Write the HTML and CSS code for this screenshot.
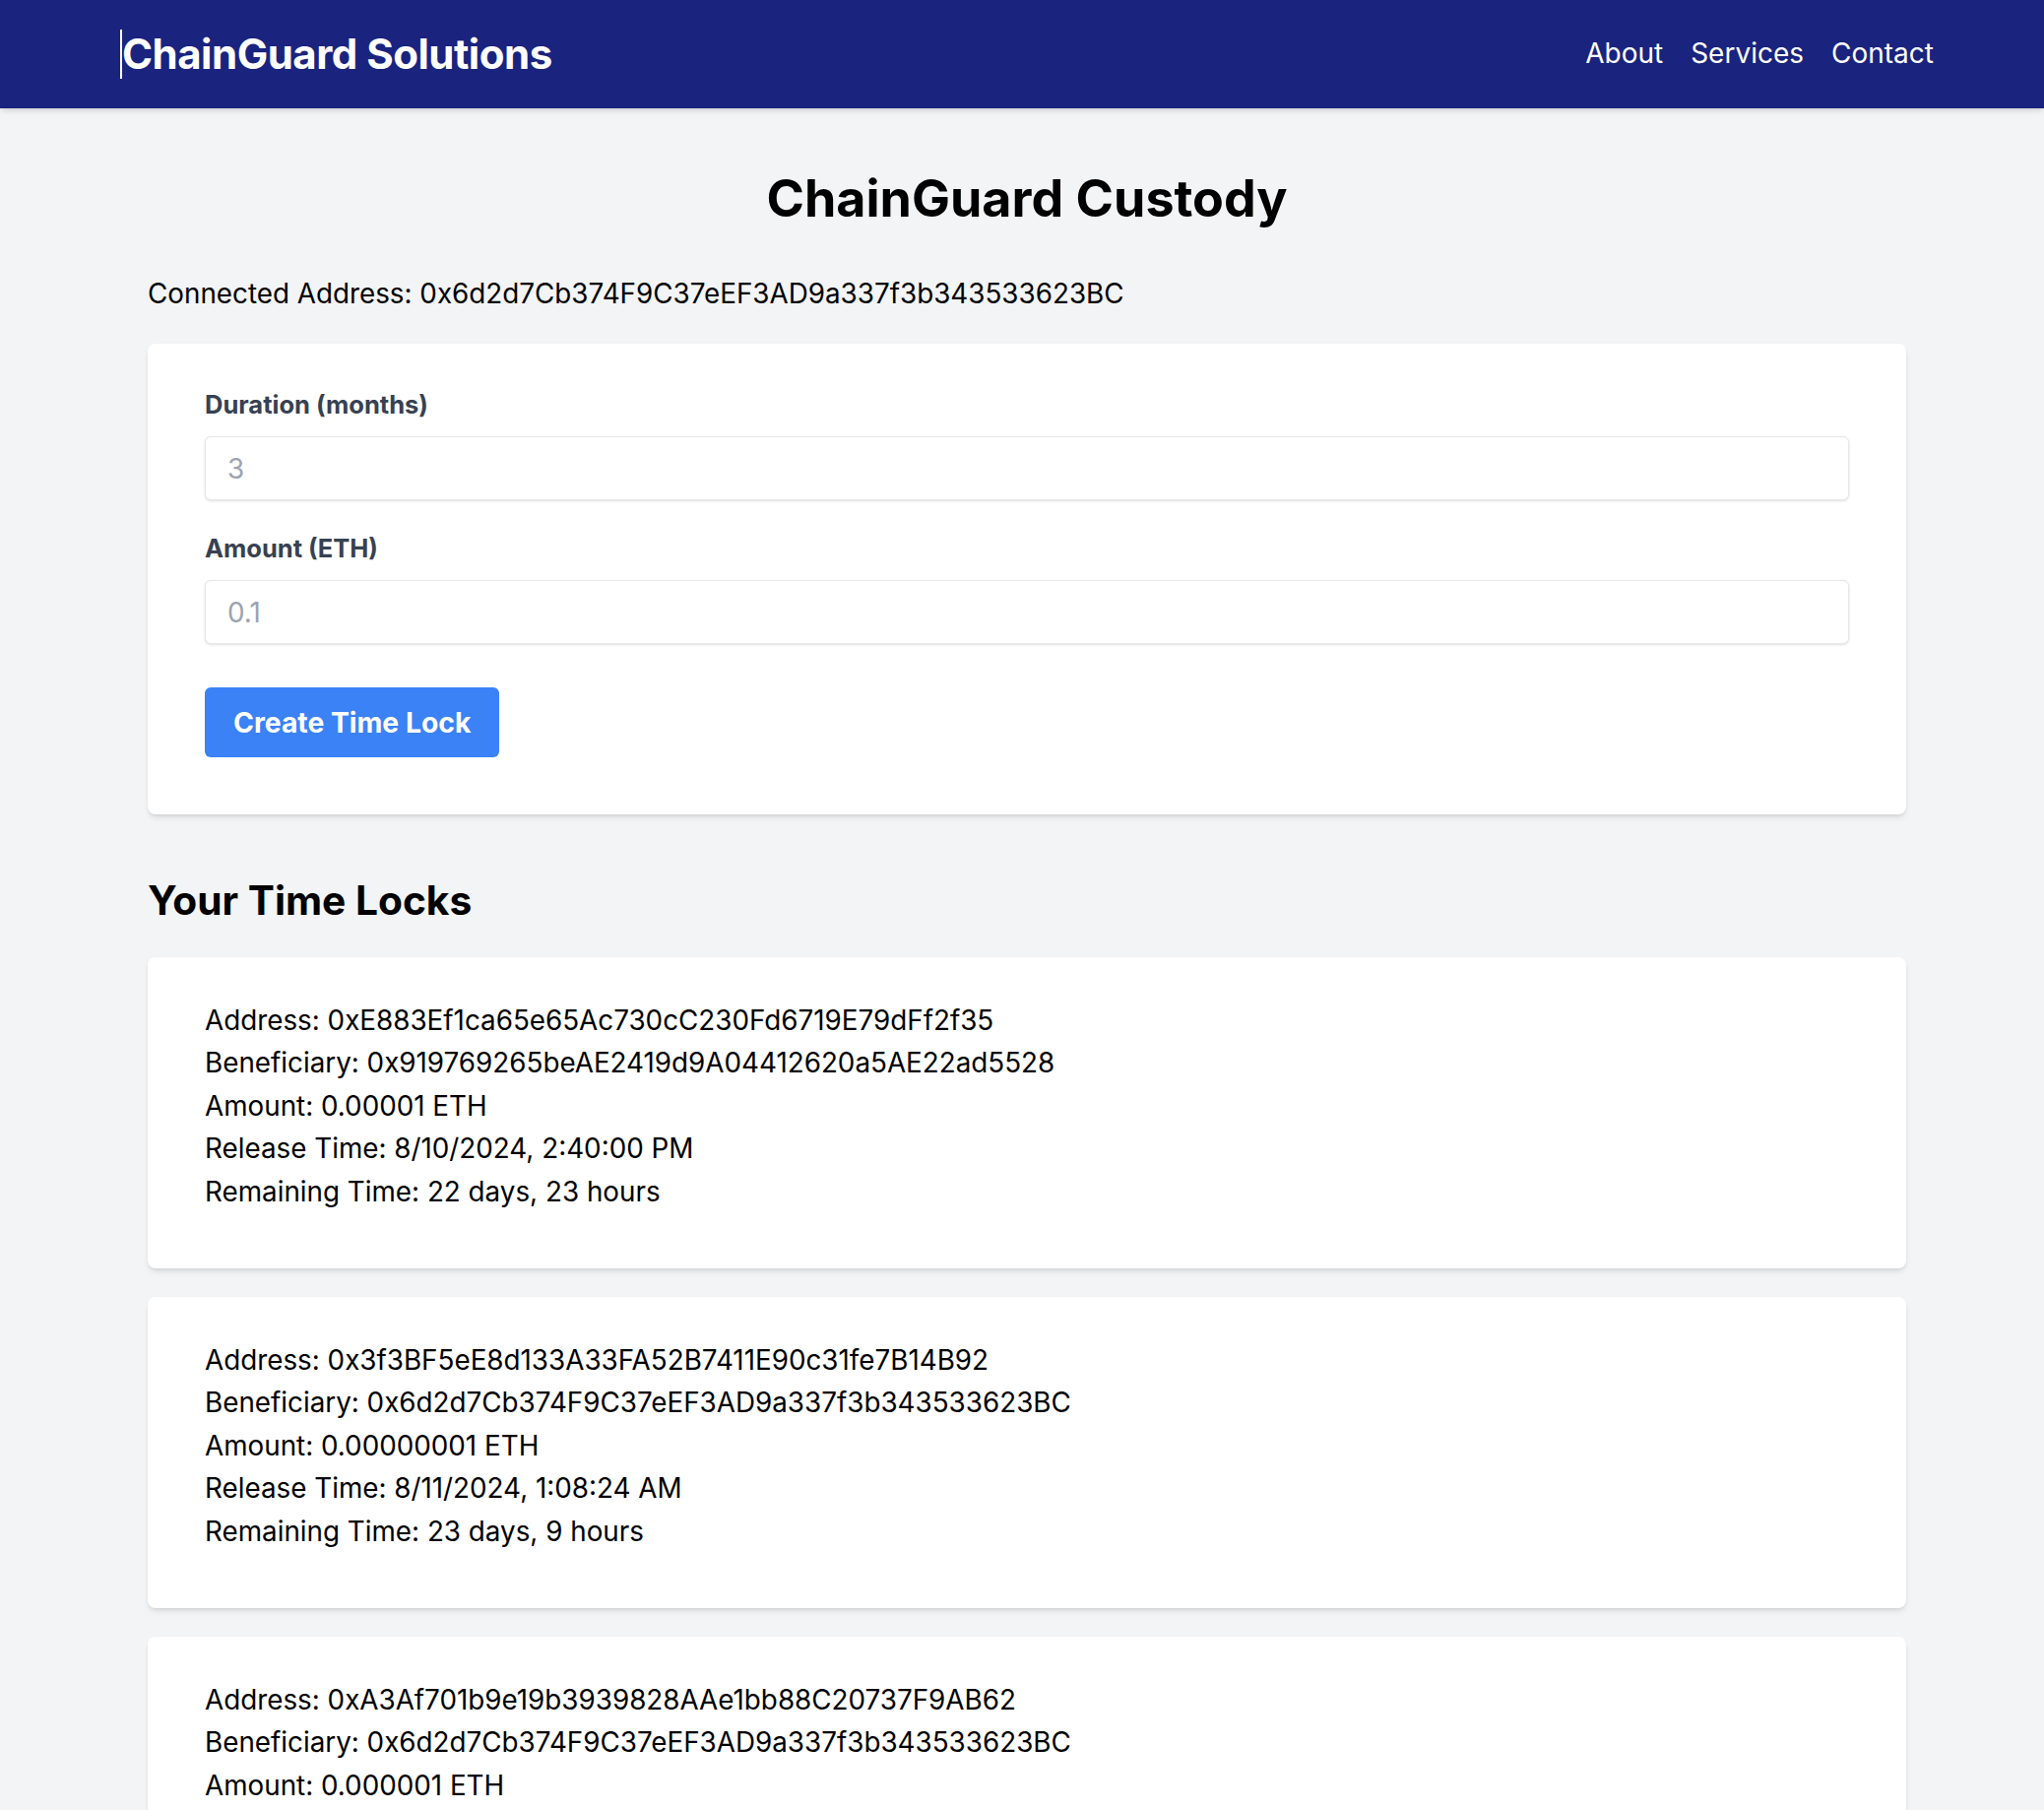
FILE: index.html
```html
<!DOCTYPE html>
<html lang="en">
<head>
<meta charset="utf-8">
<title>ChainGuard Custody</title>
<link rel="stylesheet" href="styles.css">
</head>
<body>
<header class="topbar">
  <div class="brand">ChainGuard Solutions</div>
  <nav class="nav">
    <a href="#">About</a>
    <a href="#">Services</a>
    <a href="#">Contact</a>
  </nav>
</header>
<main class="main">
  <h1 class="page-title">ChainGuard Custody</h1>
  <p class="connected">Connected Address: 0x6d2d7Cb374F9C37eEF3AD9a337f3b343533623BC</p>
  <form class="card form-card">
    <label class="label" for="duration">Duration (months)</label>
    <input class="input" id="duration" type="text" placeholder="3">
    <label class="label label-second" for="amount">Amount (ETH)</label>
    <input class="input" id="amount" type="text" placeholder="0.1">
    <button class="btn" type="button">Create Time Lock</button>
  </form>
  <h2 class="section-title">Your Time Locks</h2>
  <div class="locks">
    <div class="card lock">
      <p>Address: 0xE883Ef1ca65e65Ac730cC230Fd6719E79dFf2f35</p>
      <p>Beneficiary: 0x919769265beAE2419d9A04412620a5AE22ad5528</p>
      <p>Amount: 0.00001 ETH</p>
      <p>Release Time: 8/10/2024, 2:40:00 PM</p>
      <p>Remaining Time: 22 days, 23 hours</p>
    </div>
    <div class="card lock">
      <p>Address: 0x3f3BF5eE8d133A33FA52B7411E90c31fe7B14B92</p>
      <p>Beneficiary: 0x6d2d7Cb374F9C37eEF3AD9a337f3b343533623BC</p>
      <p>Amount: 0.00000001 ETH</p>
      <p>Release Time: 8/11/2024, 1:08:24 AM</p>
      <p>Remaining Time: 23 days, 9 hours</p>
    </div>
    <div class="card lock">
      <p>Address: 0xA3Af701b9e19b3939828AAe1bb88C20737F9AB62</p>
      <p>Beneficiary: 0x6d2d7Cb374F9C37eEF3AD9a337f3b343533623BC</p>
      <p>Amount: 0.000001 ETH</p>
    </div>
  </div>
</main>
</body>
</html>
```

FILE: styles.css
```css
* { box-sizing: border-box; }

html, body {
  margin: 0;
  padding: 0;
}

body {
  background: #f3f4f6;
  font-family: Inter, "Noto Sans", "Liberation Sans", sans-serif;
  color: #000;
}

.topbar {
  height: 110px;
  background: #1a237e;
  display: flex;
  align-items: center;
  justify-content: space-between;
  padding: 0 112px 0 122px;
  box-shadow: 0 4px 6px -1px rgba(0,0,0,0.1), 0 2px 4px -2px rgba(0,0,0,0.1);
}

.brand {
  color: #fff;
  font-size: 42px;
  font-weight: 700;
  line-height: 50px;
  border-left: 2px solid #fff;
  letter-spacing: -0.5px;
}

.nav {
  display: flex;
  gap: 28px;
  margin-bottom: 2px;
}

.nav a {
  color: #fff;
  text-decoration: none;
  font-size: 28px;
  line-height: 34px;
}

.main {
  margin: 0 140px 0 150px;
  padding-top: 62px;
}

.page-title {
  margin: 0;
  text-align: center;
  font-size: 52px;
  line-height: 60px;
  font-weight: 700;
}

.connected {
  margin: 50px 0 0;
  font-size: 27.8px;
  line-height: 32px;
}

.card {
  background: #fff;
  border-radius: 8px;
  box-shadow: 0 4px 6px -1px rgba(0,0,0,0.1), 0 2px 4px -2px rgba(0,0,0,0.1);
}

.form-card {
  margin-top: 35px;
  padding: 46px 58px 58px;
  display: flex;
  flex-direction: column;
  align-items: flex-start;
}

.label {
  display: block;
  font-size: 25.5px;
  line-height: 32px;
  font-weight: 700;
  color: #374151;
}

.label-second {
  margin-top: 33px;
}

.input {
  display: block;
  width: 100%;
  height: 65px;
  margin-top: 16px;
  border: 1px solid #e5e7eb;
  border-radius: 6px;
  padding: 0 22px;
  font-family: inherit;
  font-size: 27.8px;
  color: #374151;
  background: #fff;
  box-shadow: 0 1px 3px 0 rgba(0,0,0,0.1), 0 1px 2px -1px rgba(0,0,0,0.1);
  outline: none;
}

.input::placeholder {
  color: #9ca3af;
}

.btn {
  margin-top: 44px;
  height: 71px;
  padding: 0 29px;
  border: none;
  border-radius: 6px;
  background: #3b82f6;
  color: #fff;
  font-family: inherit;
  font-size: 28.3px;
  font-weight: 700;
}

.section-title {
  margin: 63px 0 0;
  font-size: 40.7px;
  line-height: 50px;
  font-weight: 700;
}

.locks {
  margin-top: 32px;
  display: flex;
  flex-direction: column;
  gap: 29px;
}

.lock {
  padding: 43px 58px 55px;
  height: 316px;
}

.lock p {
  margin: 0;
  font-size: 27.8px;
  line-height: 43.4px;
}
```
